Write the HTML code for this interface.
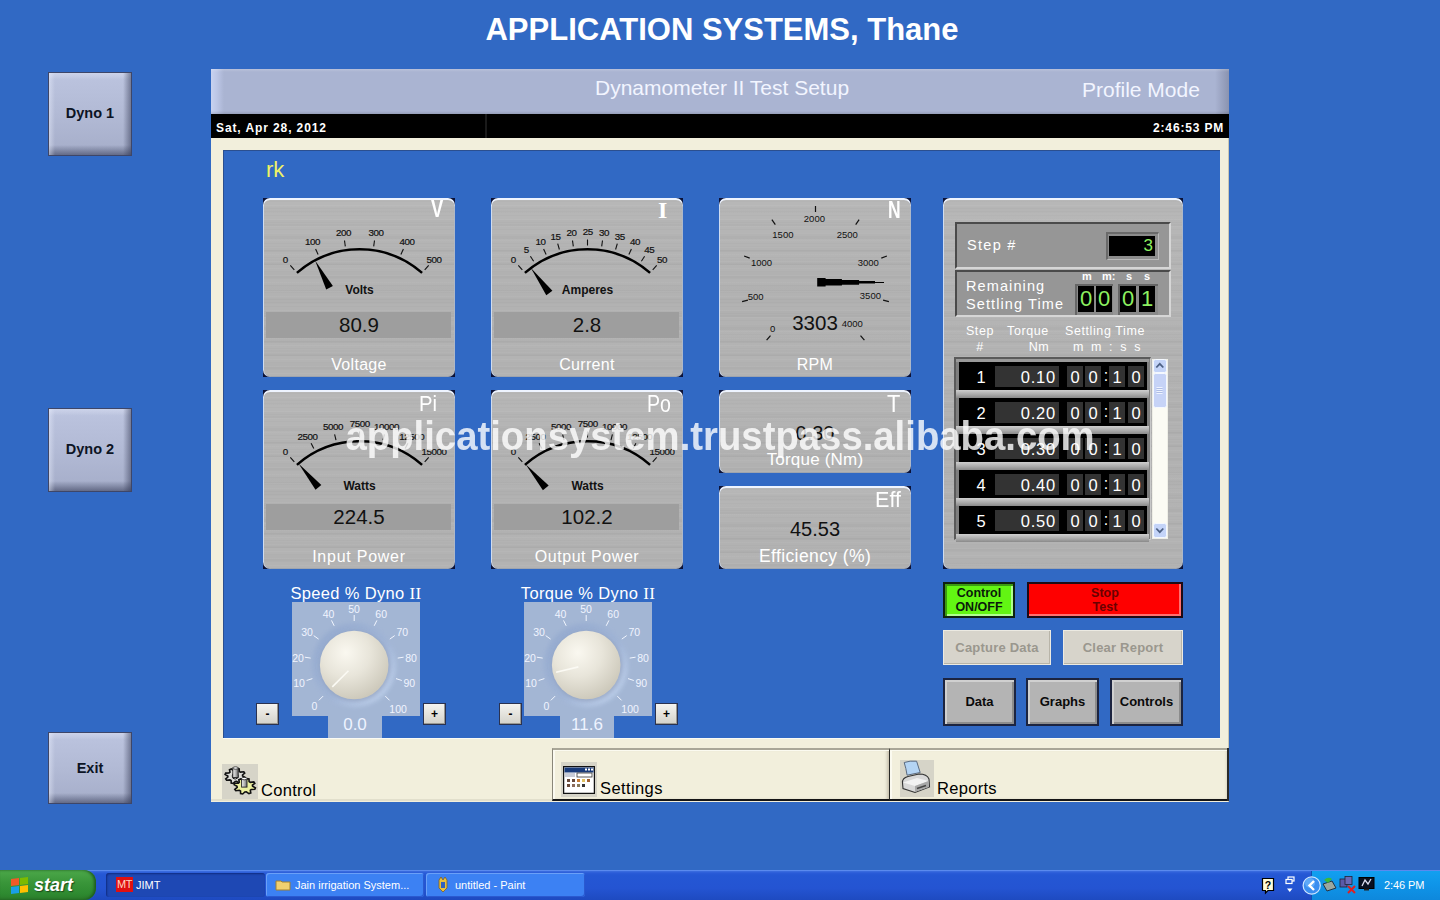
<!DOCTYPE html><html><head><meta charset="utf-8"><style>
*{margin:0;padding:0;box-sizing:border-box}
html,body{width:1440px;height:900px;overflow:hidden}
body{background:#3169C4;font-family:"Liberation Sans",sans-serif;position:relative}
.a{position:absolute}
#title{left:0;width:1444px;top:12px;text-align:center;color:#fff;font:bold 31px "Liberation Sans",sans-serif}
.dyno{width:84px;height:84px;border:1px solid #3e4668;background:
 linear-gradient(90deg,rgba(235,240,255,.45) 0,rgba(255,255,255,0) 6px,rgba(0,0,0,0) calc(100% - 8px),rgba(46,52,80,.5) 100%),
 linear-gradient(180deg,rgba(235,240,255,.35) 0,rgba(255,255,255,0) 7px,rgba(0,0,0,0) calc(100% - 10px),rgba(46,52,80,.55) 100%),
 linear-gradient(#bcc4df,#b2bad5 50%,#a5adc9);font:bold 14.5px "Liberation Sans",sans-serif;color:#0c1424;display:flex;align-items:center;justify-content:center;padding-bottom:2px}
#hdr{left:211px;top:69px;width:1018px;height:45px;background:linear-gradient(180deg,rgba(255,255,255,.18) 0,rgba(255,255,255,0) 3px,rgba(0,0,0,0) 42px,rgba(0,0,0,.12) 45px),linear-gradient(90deg,#c8d2f0 0,#bcc6e6 6px,#aab4d2 13px,#aab4d2 1004px,#8a93b0 1018px)}
#hdr span{position:absolute;color:#f2f5ff;font-size:21px;white-space:nowrap}
#blk{left:211px;top:114px;width:1018px;height:24px;background:#000;color:#fff;font:bold 12px "Liberation Sans",sans-serif;letter-spacing:.9px}
#cream{left:211px;top:138px;width:1018px;height:664px;background:#f2efdc;border-right:1px solid #c9c6b4}
#inner{left:223px;top:150px;width:997px;height:588px;background:#3169C4;box-shadow:inset 1px 1px 0 #2b4f8f}
.metal{background-color:#b0b0b0;background-image:
 linear-gradient(180deg,rgba(255,255,255,.07),rgba(255,255,255,.03) 25%,rgba(0,0,0,0) 60%,rgba(255,255,255,.02)),
 repeating-linear-gradient(180deg,rgba(255,255,255,.035) 0 1px,rgba(255,255,255,0) 1px 3px,rgba(0,0,0,.02) 3px 4px,rgba(255,255,255,0) 4px 7px),
 repeating-linear-gradient(180deg,rgba(0,0,0,.02) 0 2px,rgba(255,255,255,.03) 2px 9px,rgba(0,0,0,0) 9px 13px)}
.panel{border-radius:7px;box-shadow:inset 0 2px 0 #eef4ff,inset 1px 0 0 #cfdcf0,inset -1px 0 0 #aeb8c8,inset 0 -1px 0 #9ea4ae}
.pcorner{background:#0b1238}
.ptxt{position:absolute;color:#fff;white-space:nowrap;text-align:center}
.btn3{position:absolute;font:bold 12.5px "Liberation Sans",sans-serif;text-align:center;line-height:14px;display:flex;flex-direction:column;align-items:center;justify-content:center}
.tb{position:absolute;top:873px;height:24px;border-radius:3px;color:#fff;font-size:11px;white-space:nowrap}
</style></head><body>
<div id="title" class="a">APPLICATION SYSTEMS, Thane</div>
<div class="a dyno" style="left:48px;top:72px">Dyno 1</div>
<div class="a dyno" style="left:48px;top:408px">Dyno 2</div>
<div class="a dyno" style="left:48px;top:732px;height:72px;padding-bottom:0">Exit</div>
<div id="hdr" class="a"><span style="left:384px;top:7px">Dynamometer II Test Setup</span><span style="left:871px;top:9px">Profile Mode</span></div>
<div id="blk" class="a"><span class="a" style="left:5px;top:7px">Sat, Apr 28, 2012</span><span class="a" style="left:942px;top:7px;letter-spacing:.85px">2:46:53 PM</span><span class="a" style="left:274px;top:0;width:2px;height:24px;background:#1a1a1a"></span></div>
<div id="cream" class="a"></div>
<div id="inner" class="a"></div>
<div class="a" style="left:266px;top:157px;color:#eef266;font-size:22px">rk</div>
<div class="a pcorner" style="left:263px;top:198px;width:192px;height:179px"></div>
<div class="a metal panel" style="left:263px;top:198px;width:192px;height:179px;overflow:hidden"><div class="a" style="left:3px;top:114px;width:185px;height:26px;background:#9e9e9e"></div><svg class="a" style="left:0;top:0" width="192" height="179" font-family="Liberation Sans"><path d="M33.9 74.9 A95 95 0 0 1 159.1 74.9" fill="none" stroke="#000" stroke-width="2.5"/><line x1="31.3" y1="71.9" x2="27.3" y2="67.4" stroke="#111" stroke-width="1.1"/><text x="22.3" y="64.9" font-size="9.8" letter-spacing="-.45" text-anchor="middle" fill="#111" stroke="#111" stroke-width=".2">0</text><line x1="55.1" y1="56.5" x2="52.6" y2="51.0" stroke="#111" stroke-width="1.1"/><text x="49.4" y="47.3" font-size="9.8" letter-spacing="-.45" text-anchor="middle" fill="#111" stroke="#111" stroke-width=".2">100</text><line x1="82.3" y1="48.4" x2="81.5" y2="42.5" stroke="#111" stroke-width="1.1"/><text x="80.5" y="38.1" font-size="9.8" letter-spacing="-.45" text-anchor="middle" fill="#111" stroke="#111" stroke-width=".2">200</text><line x1="110.7" y1="48.4" x2="111.5" y2="42.5" stroke="#111" stroke-width="1.1"/><text x="112.9" y="38.1" font-size="9.8" letter-spacing="-.45" text-anchor="middle" fill="#111" stroke="#111" stroke-width=".2">300</text><line x1="137.9" y1="56.5" x2="140.4" y2="51.0" stroke="#111" stroke-width="1.1"/><text x="144.0" y="47.3" font-size="9.8" letter-spacing="-.45" text-anchor="middle" fill="#111" stroke="#111" stroke-width=".2">400</text><line x1="161.7" y1="71.9" x2="165.7" y2="67.4" stroke="#111" stroke-width="1.1"/><text x="171.1" y="64.9" font-size="9.8" letter-spacing="-.45" text-anchor="middle" fill="#111" stroke="#111" stroke-width=".2">500</text><path d="M52.1 62.4 L69.9 88.0 L63.2 91.6 Z" fill="#000"/><text x="96.5" y="96.0" font-size="12" font-weight="bold" text-anchor="middle" fill="#111">Volts</text></svg><div class="ptxt" style="left:0;width:192px;top:114.5px;font-size:20.5px;color:#111;line-height:24px">80.9</div><div class="ptxt" style="left:0;width:192px;top:157px;font-size:16px;letter-spacing:0.3px;line-height:20px">Voltage</div></div>
<div class="a pcorner" style="left:491px;top:198px;width:192px;height:179px"></div>
<div class="a metal panel" style="left:491px;top:198px;width:192px;height:179px;overflow:hidden"><div class="a" style="left:3px;top:114px;width:185px;height:26px;background:#9e9e9e"></div><svg class="a" style="left:0;top:0" width="192" height="179" font-family="Liberation Sans"><path d="M33.9 74.9 A95 95 0 0 1 159.1 74.9" fill="none" stroke="#000" stroke-width="2.5"/><line x1="31.3" y1="71.9" x2="27.3" y2="67.4" stroke="#111" stroke-width="1.1"/><text x="22.3" y="64.9" font-size="9.8" letter-spacing="-.45" text-anchor="middle" fill="#111" stroke="#111" stroke-width=".2">0</text><line x1="42.6" y1="63.3" x2="39.4" y2="58.3" stroke="#111" stroke-width="1.1"/><text x="35.2" y="55.1" font-size="9.8" letter-spacing="-.45" text-anchor="middle" fill="#111" stroke="#111" stroke-width=".2">5</text><line x1="55.1" y1="56.5" x2="52.6" y2="51.0" stroke="#111" stroke-width="1.1"/><text x="49.4" y="47.3" font-size="9.8" letter-spacing="-.45" text-anchor="middle" fill="#111" stroke="#111" stroke-width=".2">10</text><line x1="68.4" y1="51.5" x2="66.7" y2="45.7" stroke="#111" stroke-width="1.1"/><text x="64.6" y="41.5" font-size="9.8" letter-spacing="-.45" text-anchor="middle" fill="#111" stroke="#111" stroke-width=".2">15</text><line x1="82.3" y1="48.4" x2="81.5" y2="42.5" stroke="#111" stroke-width="1.1"/><text x="80.5" y="38.1" font-size="9.8" letter-spacing="-.45" text-anchor="middle" fill="#111" stroke="#111" stroke-width=".2">20</text><line x1="96.5" y1="47.4" x2="96.5" y2="41.4" stroke="#111" stroke-width="1.1"/><text x="96.7" y="36.9" font-size="9.8" letter-spacing="-.45" text-anchor="middle" fill="#111" stroke="#111" stroke-width=".2">25</text><line x1="110.7" y1="48.4" x2="111.5" y2="42.5" stroke="#111" stroke-width="1.1"/><text x="112.9" y="38.1" font-size="9.8" letter-spacing="-.45" text-anchor="middle" fill="#111" stroke="#111" stroke-width=".2">30</text><line x1="124.6" y1="51.5" x2="126.3" y2="45.7" stroke="#111" stroke-width="1.1"/><text x="128.8" y="41.5" font-size="9.8" letter-spacing="-.45" text-anchor="middle" fill="#111" stroke="#111" stroke-width=".2">35</text><line x1="137.9" y1="56.5" x2="140.4" y2="51.0" stroke="#111" stroke-width="1.1"/><text x="144.0" y="47.3" font-size="9.8" letter-spacing="-.45" text-anchor="middle" fill="#111" stroke="#111" stroke-width=".2">40</text><line x1="150.4" y1="63.3" x2="153.6" y2="58.3" stroke="#111" stroke-width="1.1"/><text x="158.2" y="55.1" font-size="9.8" letter-spacing="-.45" text-anchor="middle" fill="#111" stroke="#111" stroke-width=".2">45</text><line x1="161.7" y1="71.9" x2="165.7" y2="67.4" stroke="#111" stroke-width="1.1"/><text x="171.1" y="64.9" font-size="9.8" letter-spacing="-.45" text-anchor="middle" fill="#111" stroke="#111" stroke-width=".2">50</text><path d="M39.9 70.1 L61.4 92.7 L55.3 97.3 Z" fill="#000"/><text x="96.5" y="96.4" font-size="12" font-weight="bold" text-anchor="middle" fill="#111">Amperes</text></svg><div class="ptxt" style="left:0;width:192px;top:114.5px;font-size:20.5px;color:#111;line-height:24px">2.8</div><div class="ptxt" style="left:0;width:192px;top:157px;font-size:16px;letter-spacing:0.3px;line-height:20px">Current</div></div>
<div class="a pcorner" style="left:263px;top:390px;width:192px;height:179px"></div>
<div class="a metal panel" style="left:263px;top:390px;width:192px;height:179px;overflow:hidden"><div class="a" style="left:3px;top:114px;width:185px;height:26px;background:#9e9e9e"></div><svg class="a" style="left:0;top:0" width="192" height="179" font-family="Liberation Sans"><path d="M33.9 74.9 A95 95 0 0 1 159.1 74.9" fill="none" stroke="#000" stroke-width="2.5"/><line x1="31.3" y1="71.9" x2="27.3" y2="67.4" stroke="#111" stroke-width="1.1"/><text x="22.3" y="64.9" font-size="9.8" letter-spacing="-.45" text-anchor="middle" fill="#111" stroke="#111" stroke-width=".2">0</text><line x1="50.8" y1="58.6" x2="48.1" y2="53.2" stroke="#111" stroke-width="1.1"/><text x="44.6" y="49.6" font-size="9.8" letter-spacing="-.45" text-anchor="middle" fill="#111" stroke="#111" stroke-width=".2">2500</text><line x1="73.0" y1="50.2" x2="71.6" y2="44.4" stroke="#111" stroke-width="1.1"/><text x="69.9" y="40.1" font-size="9.8" letter-spacing="-.45" text-anchor="middle" fill="#111" stroke="#111" stroke-width=".2">5000</text><line x1="96.5" y1="47.4" x2="96.5" y2="41.4" stroke="#111" stroke-width="1.1"/><text x="96.7" y="36.9" font-size="9.8" letter-spacing="-.45" text-anchor="middle" fill="#111" stroke="#111" stroke-width=".2">7500</text><line x1="120.0" y1="50.2" x2="121.4" y2="44.4" stroke="#111" stroke-width="1.1"/><text x="123.5" y="40.1" font-size="9.8" letter-spacing="-.45" text-anchor="middle" fill="#111" stroke="#111" stroke-width=".2">10000</text><line x1="142.2" y1="58.6" x2="144.9" y2="53.2" stroke="#111" stroke-width="1.1"/><text x="148.8" y="49.6" font-size="9.8" letter-spacing="-.45" text-anchor="middle" fill="#111" stroke="#111" stroke-width=".2">12500</text><line x1="161.7" y1="71.9" x2="165.7" y2="67.4" stroke="#111" stroke-width="1.1"/><text x="171.1" y="64.9" font-size="9.8" letter-spacing="-.45" text-anchor="middle" fill="#111" stroke="#111" stroke-width=".2">15000</text><path d="M35.5 73.6 L58.3 94.9 L52.5 99.8 Z" fill="#000"/><text x="96.5" y="99.7" font-size="12" font-weight="bold" text-anchor="middle" fill="#111">Watts</text></svg><div class="ptxt" style="left:0;width:192px;top:114.5px;font-size:20.5px;color:#111;line-height:24px">224.5</div><div class="ptxt" style="left:0;width:192px;top:157px;font-size:16px;letter-spacing:0.75px;line-height:20px">Input Power</div></div>
<div class="a pcorner" style="left:491px;top:390px;width:192px;height:179px"></div>
<div class="a metal panel" style="left:491px;top:390px;width:192px;height:179px;overflow:hidden"><div class="a" style="left:3px;top:114px;width:185px;height:26px;background:#9e9e9e"></div><svg class="a" style="left:0;top:0" width="192" height="179" font-family="Liberation Sans"><path d="M33.9 74.9 A95 95 0 0 1 159.1 74.9" fill="none" stroke="#000" stroke-width="2.5"/><line x1="31.3" y1="71.9" x2="27.3" y2="67.4" stroke="#111" stroke-width="1.1"/><text x="22.3" y="64.9" font-size="9.8" letter-spacing="-.45" text-anchor="middle" fill="#111" stroke="#111" stroke-width=".2">0</text><line x1="50.8" y1="58.6" x2="48.1" y2="53.2" stroke="#111" stroke-width="1.1"/><text x="44.6" y="49.6" font-size="9.8" letter-spacing="-.45" text-anchor="middle" fill="#111" stroke="#111" stroke-width=".2">2500</text><line x1="73.0" y1="50.2" x2="71.6" y2="44.4" stroke="#111" stroke-width="1.1"/><text x="69.9" y="40.1" font-size="9.8" letter-spacing="-.45" text-anchor="middle" fill="#111" stroke="#111" stroke-width=".2">5000</text><line x1="96.5" y1="47.4" x2="96.5" y2="41.4" stroke="#111" stroke-width="1.1"/><text x="96.7" y="36.9" font-size="9.8" letter-spacing="-.45" text-anchor="middle" fill="#111" stroke="#111" stroke-width=".2">7500</text><line x1="120.0" y1="50.2" x2="121.4" y2="44.4" stroke="#111" stroke-width="1.1"/><text x="123.5" y="40.1" font-size="9.8" letter-spacing="-.45" text-anchor="middle" fill="#111" stroke="#111" stroke-width=".2">10000</text><line x1="142.2" y1="58.6" x2="144.9" y2="53.2" stroke="#111" stroke-width="1.1"/><text x="148.8" y="49.6" font-size="9.8" letter-spacing="-.45" text-anchor="middle" fill="#111" stroke="#111" stroke-width=".2">12500</text><line x1="161.7" y1="71.9" x2="165.7" y2="67.4" stroke="#111" stroke-width="1.1"/><text x="171.1" y="64.9" font-size="9.8" letter-spacing="-.45" text-anchor="middle" fill="#111" stroke="#111" stroke-width=".2">15000</text><path d="M34.6 74.3 L57.7 95.4 L51.9 100.3 Z" fill="#000"/><text x="96.5" y="99.7" font-size="12" font-weight="bold" text-anchor="middle" fill="#111">Watts</text></svg><div class="ptxt" style="left:0;width:192px;top:114.5px;font-size:20.5px;color:#111;line-height:24px">102.2</div><div class="ptxt" style="left:0;width:192px;top:157px;font-size:16px;letter-spacing:0.55px;line-height:20px">Output Power</div></div>
<div class="a pcorner" style="left:719px;top:198px;width:192px;height:179px"></div>
<div class="a metal panel" style="left:719px;top:198px;width:192px;height:179px;overflow:hidden"><svg class="a" style="left:0;top:0" width="192" height="179" font-family="Liberation Sans"><line x1="51.5" y1="137.6" x2="47.6" y2="142.2" stroke="#111" stroke-width="1.2"/><text x="53.7" y="133.7" font-size="9.5" text-anchor="middle" fill="#111">0</text><line x1="28.9" y1="102.1" x2="23.1" y2="103.7" stroke="#111" stroke-width="1.2"/><text x="36.6" y="101.7" font-size="9.5" text-anchor="middle" fill="#111">500</text><line x1="30.7" y1="60.1" x2="25.1" y2="58.0" stroke="#111" stroke-width="1.2"/><text x="42.6" y="67.7" font-size="9.5" text-anchor="middle" fill="#111">1000</text><line x1="56.3" y1="26.7" x2="52.9" y2="21.7" stroke="#111" stroke-width="1.2"/><text x="63.9" y="39.9" font-size="9.5" text-anchor="middle" fill="#111">1500</text><line x1="96.5" y1="14.0" x2="96.5" y2="8.0" stroke="#111" stroke-width="1.2"/><text x="95.4" y="23.9" font-size="9.5" text-anchor="middle" fill="#111">2000</text><line x1="136.7" y1="26.7" x2="140.1" y2="21.7" stroke="#111" stroke-width="1.2"/><text x="128.3" y="39.9" font-size="9.5" text-anchor="middle" fill="#111">2500</text><line x1="162.3" y1="60.1" x2="167.9" y2="58.0" stroke="#111" stroke-width="1.2"/><text x="149.2" y="67.7" font-size="9.5" text-anchor="middle" fill="#111">3000</text><line x1="164.1" y1="102.1" x2="169.9" y2="103.7" stroke="#111" stroke-width="1.2"/><text x="151.4" y="101.1" font-size="9.5" text-anchor="middle" fill="#111">3500</text><line x1="141.5" y1="137.6" x2="145.4" y2="142.2" stroke="#111" stroke-width="1.2"/><text x="133.2" y="128.6" font-size="9.5" text-anchor="middle" fill="#111">4000</text><path d="M98.2 80.1 H106.6 V81 H122.9 V82 H140.1 V83.1 H156 V84 H165 V84.9 H156 V85.6 H140.1 V86.7 H122.9 V87.6 H106.6 V88.6 H98.2 Z" fill="#000"/></svg><div class="ptxt" style="left:0;width:192px;top:113.3px;font-size:20.5px;color:#111;line-height:24px">3303</div><div class="ptxt" style="left:0;width:192px;top:157px;font-size:16px;letter-spacing:0.3px;line-height:20px">RPM</div></div>
<div class="a pcorner" style="left:719px;top:390px;width:192px;height:83px"></div>
<div class="a metal panel" style="left:719px;top:390px;width:192px;height:83px;overflow:hidden"><div class="ptxt" style="left:0;width:192px;top:31px;font-size:20px;color:#111;line-height:24px">0.30</div><div class="ptxt" style="left:0;width:192px;top:60px;font-size:17px;letter-spacing:0.2px;line-height:20px">Torque (Nm)</div></div>
<div class="a pcorner" style="left:719px;top:486px;width:192px;height:83px"></div>
<div class="a metal panel" style="left:719px;top:486px;width:192px;height:83px;overflow:hidden"><div class="ptxt" style="left:0;width:192px;top:31px;font-size:20px;color:#111;line-height:24px">45.53</div><div class="ptxt" style="left:0;width:192px;top:60px;font-size:17.5px;letter-spacing:0.4px;line-height:20px">Efficiency (%)</div></div>
<div class="a pcorner" style="left:943px;top:198px;width:240px;height:371px"></div>
<div class="a metal panel" style="left:943px;top:198px;width:240px;height:371px;overflow:hidden"><div class="a" style="left:12px;top:24px;width:216px;height:47px;background:#969696;border-top:2px solid #4a4a4a;border-left:2px solid #4a4a4a;border-bottom:2px solid #d6d6d6;border-right:2px solid #d6d6d6"></div><div class="a" style="left:12px;top:72px;width:216px;height:47px;background:#969696;border-top:2px solid #4a4a4a;border-left:2px solid #4a4a4a;border-bottom:2px solid #d6d6d6;border-right:2px solid #d6d6d6"></div><div class="ptxt" style="left:24px;top:38px;font-size:14.5px;letter-spacing:1.3px;line-height:18px;text-align:left">Step #</div><div class="a" style="left:163px;top:34px;width:53px;height:28px;background:#8c8c8c;border-top:2px solid #6a6a6a;border-left:2px solid #6a6a6a;border-right:1px solid #b8b8b8;border-bottom:1px solid #b8b8b8"></div><div class="a" style="left:166px;top:38px;width:46px;height:20px;background:#000"></div><div class="ptxt" style="left:166px;width:44px;top:38px;font-size:17px;line-height:20px;color:#8df060;text-align:right">3</div><div class="ptxt" style="left:23px;top:79px;font-size:14.5px;letter-spacing:1.1px;line-height:18px;text-align:left">Remaining<br>Settling Time</div><div class="ptxt" style="left:139px;top:71px;font:bold 11px 'Liberation Sans',sans-serif;line-height:14px">m</div><div class="ptxt" style="left:159px;top:71px;font:bold 11px 'Liberation Sans',sans-serif;line-height:14px">m:</div><div class="ptxt" style="left:183px;top:71px;font:bold 11px 'Liberation Sans',sans-serif;line-height:14px">s</div><div class="ptxt" style="left:201px;top:71px;font:bold 11px 'Liberation Sans',sans-serif;line-height:14px">s</div><div class="a" style="left:132px;top:86px;width:38px;height:31px;background:#8a8a8a;border-top:2px solid #666;border-left:2px solid #666"></div><div class="a" style="left:175px;top:86px;width:40px;height:31px;background:#8a8a8a;border-top:2px solid #666;border-left:2px solid #666"></div><div class="a" style="left:135px;top:88px;width:16px;height:26px;background:#000;color:#8df060;font-size:22px;line-height:26px;text-align:center">0</div><div class="a" style="left:153px;top:88px;width:16px;height:26px;background:#000;color:#8df060;font-size:22px;line-height:26px;text-align:center">0</div><div class="a" style="left:177px;top:88px;width:16px;height:26px;background:#000;color:#8df060;font-size:22px;line-height:26px;text-align:center">0</div><div class="a" style="left:196px;top:88px;width:16px;height:26px;background:#000;color:#8df060;font-size:22px;line-height:26px;text-align:center">1</div><div class="ptxt" style="left:22px;width:30px;top:126px;font-size:12.5px;letter-spacing:.6px;line-height:14px">Step</div><div class="ptxt" style="left:60px;width:50px;top:126px;font-size:12.5px;letter-spacing:.6px;line-height:14px">Torque</div><div class="ptxt" style="left:118px;width:88px;top:126px;font-size:12.5px;letter-spacing:.6px;line-height:14px">Settling Time</div><div class="ptxt" style="left:22px;width:30px;top:142px;font-size:12.5px;letter-spacing:.6px;line-height:14px">#</div><div class="ptxt" style="left:81px;width:30px;top:142px;font-size:12.5px;letter-spacing:.6px;line-height:14px">Nm</div><div class="ptxt" style="left:118px;width:92px;top:142px;font-size:12.5px;letter-spacing:.6px;line-height:14px;word-spacing:3px">m m : s s</div><div class="a" style="left:11px;top:159px;width:197px;height:183px;background:#7e7e7e;border-top:2px solid #5a5a5a;border-left:2px solid #5a5a5a;border-right:1px solid #c8c8c8;border-bottom:1px solid #c8c8c8"></div><div class="a" style="left:13px;top:161px;width:193px;height:3px;background:#9a9a9a"></div><div class="a" style="left:13px;top:192px;width:193px;height:8px;background:linear-gradient(#cfcfcf,#a8a8a8 60%,#8a8a8a)"></div><div class="a" style="left:16px;top:164px;width:188px;height:28px;background:#000"></div><div class="ptxt" style="left:28px;width:20px;top:170px;font-size:16.5px;line-height:18px">1</div><div class="a" style="left:52px;top:168px;width:64px;height:21px;background:#333"></div><div class="ptxt" style="left:52px;width:61px;top:170px;font-size:16.5px;letter-spacing:.8px;line-height:18px;text-align:right">0.10</div><div class="a" style="left:124px;top:168px;width:16px;height:21px;background:#333;color:#fff;font-size:16.5px;line-height:22px;text-align:center">0</div><div class="a" style="left:142px;top:168px;width:16px;height:21px;background:#333;color:#fff;font-size:16.5px;line-height:22px;text-align:center">0</div><div class="a" style="left:166px;top:168px;width:16px;height:21px;background:#333;color:#fff;font-size:16.5px;line-height:22px;text-align:center">1</div><div class="a" style="left:185px;top:168px;width:16px;height:21px;background:#333;color:#fff;font-size:16.5px;line-height:22px;text-align:center">0</div><div class="ptxt" style="left:159px;width:8px;top:168px;font-size:16px;line-height:19px">:</div><div class="a" style="left:13px;top:228px;width:193px;height:8px;background:linear-gradient(#cfcfcf,#a8a8a8 60%,#8a8a8a)"></div><div class="a" style="left:16px;top:200px;width:188px;height:28px;background:#000"></div><div class="ptxt" style="left:28px;width:20px;top:206px;font-size:16.5px;line-height:18px">2</div><div class="a" style="left:52px;top:204px;width:64px;height:21px;background:#333"></div><div class="ptxt" style="left:52px;width:61px;top:206px;font-size:16.5px;letter-spacing:.8px;line-height:18px;text-align:right">0.20</div><div class="a" style="left:124px;top:204px;width:16px;height:21px;background:#333;color:#fff;font-size:16.5px;line-height:22px;text-align:center">0</div><div class="a" style="left:142px;top:204px;width:16px;height:21px;background:#333;color:#fff;font-size:16.5px;line-height:22px;text-align:center">0</div><div class="a" style="left:166px;top:204px;width:16px;height:21px;background:#333;color:#fff;font-size:16.5px;line-height:22px;text-align:center">1</div><div class="a" style="left:185px;top:204px;width:16px;height:21px;background:#333;color:#fff;font-size:16.5px;line-height:22px;text-align:center">0</div><div class="ptxt" style="left:159px;width:8px;top:204px;font-size:16px;line-height:19px">:</div><div class="a" style="left:13px;top:264px;width:193px;height:8px;background:linear-gradient(#cfcfcf,#a8a8a8 60%,#8a8a8a)"></div><div class="a" style="left:16px;top:236px;width:188px;height:28px;background:#000"></div><div class="ptxt" style="left:28px;width:20px;top:242px;font-size:16.5px;line-height:18px">3</div><div class="a" style="left:52px;top:240px;width:64px;height:21px;background:#333"></div><div class="ptxt" style="left:52px;width:61px;top:242px;font-size:16.5px;letter-spacing:.8px;line-height:18px;text-align:right">0.30</div><div class="a" style="left:124px;top:240px;width:16px;height:21px;background:#333;color:#fff;font-size:16.5px;line-height:22px;text-align:center">0</div><div class="a" style="left:142px;top:240px;width:16px;height:21px;background:#333;color:#fff;font-size:16.5px;line-height:22px;text-align:center">0</div><div class="a" style="left:166px;top:240px;width:16px;height:21px;background:#333;color:#fff;font-size:16.5px;line-height:22px;text-align:center">1</div><div class="a" style="left:185px;top:240px;width:16px;height:21px;background:#333;color:#fff;font-size:16.5px;line-height:22px;text-align:center">0</div><div class="ptxt" style="left:159px;width:8px;top:240px;font-size:16px;line-height:19px">:</div><div class="a" style="left:13px;top:300px;width:193px;height:8px;background:linear-gradient(#cfcfcf,#a8a8a8 60%,#8a8a8a)"></div><div class="a" style="left:16px;top:272px;width:188px;height:28px;background:#000"></div><div class="ptxt" style="left:28px;width:20px;top:278px;font-size:16.5px;line-height:18px">4</div><div class="a" style="left:52px;top:276px;width:64px;height:21px;background:#333"></div><div class="ptxt" style="left:52px;width:61px;top:278px;font-size:16.5px;letter-spacing:.8px;line-height:18px;text-align:right">0.40</div><div class="a" style="left:124px;top:276px;width:16px;height:21px;background:#333;color:#fff;font-size:16.5px;line-height:22px;text-align:center">0</div><div class="a" style="left:142px;top:276px;width:16px;height:21px;background:#333;color:#fff;font-size:16.5px;line-height:22px;text-align:center">0</div><div class="a" style="left:166px;top:276px;width:16px;height:21px;background:#333;color:#fff;font-size:16.5px;line-height:22px;text-align:center">1</div><div class="a" style="left:185px;top:276px;width:16px;height:21px;background:#333;color:#fff;font-size:16.5px;line-height:22px;text-align:center">0</div><div class="ptxt" style="left:159px;width:8px;top:276px;font-size:16px;line-height:19px">:</div><div class="a" style="left:13px;top:336px;width:193px;height:8px;background:linear-gradient(#cfcfcf,#a8a8a8 60%,#8a8a8a)"></div><div class="a" style="left:16px;top:308px;width:188px;height:28px;background:#000"></div><div class="ptxt" style="left:28px;width:20px;top:314px;font-size:16.5px;line-height:18px">5</div><div class="a" style="left:52px;top:312px;width:64px;height:21px;background:#333"></div><div class="ptxt" style="left:52px;width:61px;top:314px;font-size:16.5px;letter-spacing:.8px;line-height:18px;text-align:right">0.50</div><div class="a" style="left:124px;top:312px;width:16px;height:21px;background:#333;color:#fff;font-size:16.5px;line-height:22px;text-align:center">0</div><div class="a" style="left:142px;top:312px;width:16px;height:21px;background:#333;color:#fff;font-size:16.5px;line-height:22px;text-align:center">0</div><div class="a" style="left:166px;top:312px;width:16px;height:21px;background:#333;color:#fff;font-size:16.5px;line-height:22px;text-align:center">1</div><div class="a" style="left:185px;top:312px;width:16px;height:21px;background:#333;color:#fff;font-size:16.5px;line-height:22px;text-align:center">0</div><div class="ptxt" style="left:159px;width:8px;top:312px;font-size:16px;line-height:19px">:</div><div class="a" style="left:209px;top:161px;width:16px;height:180px;background:#fbfbf4;border:1px solid #eeeee6"></div><svg class="a" style="left:209px;top:160px" width="16" height="182"><rect x="1.5" y="1.5" width="13" height="13" rx="2" fill="#c4d4f8" stroke="#f4f8ff" stroke-width="1"/><path d="M4.3 9.5 L7.8 5.8 L11.3 9.5" fill="none" stroke="#4d6185" stroke-width="1.8"/><rect x="1.5" y="15.5" width="13" height="34" rx="2" fill="#c6d3f7" stroke="#f4f8ff" stroke-width="1"/><path d="M4.5 29.5h6M4.5 31.5h6M4.5 33.5h6M4.5 35.5h6" stroke="#eef3ff" stroke-width="1"/><path d="M4.5 30.5h6M4.5 32.5h6M4.5 34.5h6" stroke="#a8b8e0" stroke-width=".8"/><rect x="1.5" y="165.5" width="13" height="14" rx="2" fill="#c4d4f8" stroke="#f4f8ff" stroke-width="1"/><path d="M4.3 170.5 L7.8 174.2 L11.3 170.5" fill="none" stroke="#4d6185" stroke-width="1.8"/></svg></div>
<div class="btn3" style="left:943px;top:582px;width:72px;height:36px;background:#62f513;border:2px solid #0e2210;box-shadow:inset 2px 2px 0 #3c9a12,inset -2px -2px 0 #b0ff90;color:#0a1a0a">Control<br>ON/OFF</div>
<div class="btn3" style="left:1027px;top:582px;width:156px;height:36px;background:#fe0000;border:2px solid #1e0a14;box-shadow:inset -2px -2px 0 #ff7070;color:#6a0000">Stop<br>Test</div>
<div class="btn3" style="left:943px;top:630px;width:108px;height:35px;background:#d7d4cb;border:1px solid #eceae2;box-shadow:inset -1px -1px 0 #b8b4a8;color:#9a978e;font-size:13px;letter-spacing:.2px">Capture Data</div>
<div class="btn3" style="left:1063px;top:630px;width:120px;height:35px;background:#d7d4cb;border:1px solid #eceae2;box-shadow:inset -1px -1px 0 #b8b4a8;color:#9a978e;font-size:13px;letter-spacing:.2px">Clear Report</div>
<div class="btn3" style="left:943px;top:678px;width:73px;height:48px;background:#b4b4b4;border:2px solid #1c2440;box-shadow:inset 2px 2px 0 #d0d0d0,inset -2px -2px 0 #8c8c8c;color:#0a0a0a;font-size:13px">Data</div>
<div class="btn3" style="left:1026px;top:678px;width:73px;height:48px;background:#b4b4b4;border:2px solid #1c2440;box-shadow:inset 2px 2px 0 #d0d0d0,inset -2px -2px 0 #8c8c8c;color:#0a0a0a;font-size:13px">Graphs</div>
<div class="btn3" style="left:1110px;top:678px;width:73px;height:48px;background:#b4b4b4;border:2px solid #1c2440;box-shadow:inset 2px 2px 0 #d0d0d0,inset -2px -2px 0 #8c8c8c;color:#0a0a0a;font-size:13px">Controls</div>
<div class="a" style="left:278px;top:583px;width:156px;text-align:center;color:#fff;font-size:16.5px;line-height:20px;white-space:nowrap;letter-spacing:.35px">Speed % Dyno <span style="font-family:Liberation Serif;font-size:17px">II</span></div>
<div class="a" style="left:292px;top:602px;width:128px;height:114px;background:#a3b6d4"></div>
<div class="a" style="left:328px;top:716px;width:54px;height:22px;background:#a3b6d4"></div>
<div class="a" style="left:328px;top:714px;width:54px;text-align:center;color:#eef3ff;font-size:17px;line-height:22px">0.0</div>
<svg class="a" style="left:292px;top:602px" width="128" height="114" font-family="Liberation Sans"><defs><radialGradient id="kg292" cx="38%" cy="32%" r="70%"><stop offset="0" stop-color="#faf8f0"/><stop offset=".5" stop-color="#e8e5da"/><stop offset="1" stop-color="#cdc9bb"/></radialGradient><linearGradient id="rg292" x1="0" y1="0" x2="1" y2="1"><stop offset="0" stop-color="#90a6cc"/><stop offset=".55" stop-color="#a0b4d6"/><stop offset="1" stop-color="#cfe0f8"/></linearGradient></defs><filter id="bl292" x="-30%" y="-30%" width="160%" height="160%"><feGaussianBlur stdDeviation="2.2"/></filter><circle cx="62.2" cy="63" r="42" fill="url(#rg292)" filter="url(#bl292)" opacity=".85"/><circle cx="63.2" cy="64.5" r="35" fill="#8a98b4" opacity=".55" filter="url(#bl292)"/><circle cx="62.2" cy="63" r="34.3" fill="url(#kg292)"/><line x1="31.1" y1="94.1" x2="26.8" y2="98.4" stroke="#f2f6ff" stroke-width="1"/><line x1="20.4" y1="76.6" x2="14.6" y2="78.5" stroke="#f2f6ff" stroke-width="1"/><line x1="18.7" y1="56.1" x2="12.8" y2="55.2" stroke="#f2f6ff" stroke-width="1"/><line x1="26.6" y1="37.1" x2="21.7" y2="33.6" stroke="#f2f6ff" stroke-width="1"/><line x1="42.2" y1="23.8" x2="39.5" y2="18.4" stroke="#f2f6ff" stroke-width="1"/><line x1="62.2" y1="19.0" x2="62.2" y2="13.0" stroke="#f2f6ff" stroke-width="1"/><line x1="82.2" y1="23.8" x2="84.9" y2="18.4" stroke="#f2f6ff" stroke-width="1"/><line x1="97.8" y1="37.1" x2="102.7" y2="33.6" stroke="#f2f6ff" stroke-width="1"/><line x1="105.7" y1="56.1" x2="111.6" y2="55.2" stroke="#f2f6ff" stroke-width="1"/><line x1="104.0" y1="76.6" x2="109.8" y2="78.5" stroke="#f2f6ff" stroke-width="1"/><line x1="93.3" y1="94.1" x2="97.6" y2="98.4" stroke="#f2f6ff" stroke-width="1"/><text x="22.4" y="107.5" font-size="10.5" text-anchor="middle" fill="#f0f4ff">0</text><text x="7.1" y="85.1" font-size="10.5" text-anchor="middle" fill="#f0f4ff">10</text><text x="6.1" y="59.5" font-size="10.5" text-anchor="middle" fill="#f0f4ff">20</text><text x="15.1" y="34.0" font-size="10.5" text-anchor="middle" fill="#f0f4ff">30</text><text x="36.5" y="15.5" font-size="10.5" text-anchor="middle" fill="#f0f4ff">40</text><text x="62" y="11.0" font-size="10.5" text-anchor="middle" fill="#f0f4ff">50</text><text x="89.2" y="15.5" font-size="10.5" text-anchor="middle" fill="#f0f4ff">60</text><text x="110.3" y="34.0" font-size="10.5" text-anchor="middle" fill="#f0f4ff">70</text><text x="119" y="59.5" font-size="10.5" text-anchor="middle" fill="#f0f4ff">80</text><text x="117.3" y="85.1" font-size="10.5" text-anchor="middle" fill="#f0f4ff">90</text><text x="106.1" y="110.7" font-size="10.5" text-anchor="middle" fill="#f0f4ff">100</text><line x1="56.5" y1="68.7" x2="40.3" y2="84.9" stroke="#fbfaf4" stroke-width="1.6"/></svg>
<div class="a" style="left:510px;top:583px;width:156px;text-align:center;color:#fff;font-size:16.5px;line-height:20px;white-space:nowrap;letter-spacing:.35px">Torque % Dyno <span style="font-family:Liberation Serif;font-size:17px">II</span></div>
<div class="a" style="left:524px;top:602px;width:128px;height:114px;background:#a3b6d4"></div>
<div class="a" style="left:560px;top:716px;width:54px;height:22px;background:#a3b6d4"></div>
<div class="a" style="left:560px;top:714px;width:54px;text-align:center;color:#eef3ff;font-size:17px;line-height:22px">11.6</div>
<svg class="a" style="left:524px;top:602px" width="128" height="114" font-family="Liberation Sans"><defs><radialGradient id="kg524" cx="38%" cy="32%" r="70%"><stop offset="0" stop-color="#faf8f0"/><stop offset=".5" stop-color="#e8e5da"/><stop offset="1" stop-color="#cdc9bb"/></radialGradient><linearGradient id="rg524" x1="0" y1="0" x2="1" y2="1"><stop offset="0" stop-color="#90a6cc"/><stop offset=".55" stop-color="#a0b4d6"/><stop offset="1" stop-color="#cfe0f8"/></linearGradient></defs><filter id="bl524" x="-30%" y="-30%" width="160%" height="160%"><feGaussianBlur stdDeviation="2.2"/></filter><circle cx="62.2" cy="63" r="42" fill="url(#rg524)" filter="url(#bl524)" opacity=".85"/><circle cx="63.2" cy="64.5" r="35" fill="#8a98b4" opacity=".55" filter="url(#bl524)"/><circle cx="62.2" cy="63" r="34.3" fill="url(#kg524)"/><line x1="31.1" y1="94.1" x2="26.8" y2="98.4" stroke="#f2f6ff" stroke-width="1"/><line x1="20.4" y1="76.6" x2="14.6" y2="78.5" stroke="#f2f6ff" stroke-width="1"/><line x1="18.7" y1="56.1" x2="12.8" y2="55.2" stroke="#f2f6ff" stroke-width="1"/><line x1="26.6" y1="37.1" x2="21.7" y2="33.6" stroke="#f2f6ff" stroke-width="1"/><line x1="42.2" y1="23.8" x2="39.5" y2="18.4" stroke="#f2f6ff" stroke-width="1"/><line x1="62.2" y1="19.0" x2="62.2" y2="13.0" stroke="#f2f6ff" stroke-width="1"/><line x1="82.2" y1="23.8" x2="84.9" y2="18.4" stroke="#f2f6ff" stroke-width="1"/><line x1="97.8" y1="37.1" x2="102.7" y2="33.6" stroke="#f2f6ff" stroke-width="1"/><line x1="105.7" y1="56.1" x2="111.6" y2="55.2" stroke="#f2f6ff" stroke-width="1"/><line x1="104.0" y1="76.6" x2="109.8" y2="78.5" stroke="#f2f6ff" stroke-width="1"/><line x1="93.3" y1="94.1" x2="97.6" y2="98.4" stroke="#f2f6ff" stroke-width="1"/><text x="22.4" y="107.5" font-size="10.5" text-anchor="middle" fill="#f0f4ff">0</text><text x="7.1" y="85.1" font-size="10.5" text-anchor="middle" fill="#f0f4ff">10</text><text x="6.1" y="59.5" font-size="10.5" text-anchor="middle" fill="#f0f4ff">20</text><text x="15.1" y="34.0" font-size="10.5" text-anchor="middle" fill="#f0f4ff">30</text><text x="36.5" y="15.5" font-size="10.5" text-anchor="middle" fill="#f0f4ff">40</text><text x="62" y="11.0" font-size="10.5" text-anchor="middle" fill="#f0f4ff">50</text><text x="89.2" y="15.5" font-size="10.5" text-anchor="middle" fill="#f0f4ff">60</text><text x="110.3" y="34.0" font-size="10.5" text-anchor="middle" fill="#f0f4ff">70</text><text x="119" y="59.5" font-size="10.5" text-anchor="middle" fill="#f0f4ff">80</text><text x="117.3" y="85.1" font-size="10.5" text-anchor="middle" fill="#f0f4ff">90</text><text x="106.1" y="110.7" font-size="10.5" text-anchor="middle" fill="#f0f4ff">100</text><line x1="54.4" y1="64.9" x2="32.1" y2="70.3" stroke="#fbfaf4" stroke-width="1.6"/></svg>
<div class="a" style="left:256px;top:703px;width:23px;height:22px;background:linear-gradient(#f4f4f0,#d4d2ca);border:1px solid #2a3250;box-shadow:inset -1px -1px 0 #9a9890;color:#000;font:bold 12px 'Liberation Sans',sans-serif;line-height:20px;text-align:center">-</div>
<div class="a" style="left:423px;top:703px;width:23px;height:22px;background:linear-gradient(#f4f4f0,#d4d2ca);border:1px solid #2a3250;box-shadow:inset -1px -1px 0 #9a9890;color:#000;font:bold 12px 'Liberation Sans',sans-serif;line-height:20px;text-align:center">+</div>
<div class="a" style="left:499px;top:703px;width:23px;height:22px;background:linear-gradient(#f4f4f0,#d4d2ca);border:1px solid #2a3250;box-shadow:inset -1px -1px 0 #9a9890;color:#000;font:bold 12px 'Liberation Sans',sans-serif;line-height:20px;text-align:center">-</div>
<div class="a" style="left:655px;top:703px;width:23px;height:22px;background:linear-gradient(#f4f4f0,#d4d2ca);border:1px solid #2a3250;box-shadow:inset -1px -1px 0 #9a9890;color:#000;font:bold 12px 'Liberation Sans',sans-serif;line-height:20px;text-align:center">+</div>
<div class="a" style="left:223px;top:738px;width:997px;height:1px;background:#fbfbf4"></div>
<div class="a" style="left:552px;top:748px;width:337px;height:53px;background:#f2efdc;border-top:2px solid #a9a697;border-left:1px solid #8a877a;border-bottom:2px solid #161616;box-shadow:inset 2px 1px 0 #fbfaf0,inset -3px 0 3px -1px rgba(120,110,90,.35)"></div>
<div class="a" style="left:889px;top:748px;width:340px;height:53px;background:#f2efdc;border-top:2px solid #a9a697;border-left:1px solid #2a2a26;border-bottom:2px solid #161616;box-shadow:inset 2px 1px 0 #fbfaf0,inset -3px 0 3px -1px rgba(120,110,90,.35)"></div>
<div class="a" style="left:1227px;top:748px;width:2px;height:53px;background:#2a2a2a"></div>
<div class="a" style="left:211px;top:799px;width:341px;height:2px;background:#e2dfcc"></div>
<div class="a" style="left:222px;top:764px;width:36px;height:35px;background:#d6d4c8"></div>
<div class="a" style="left:561px;top:762px;width:36px;height:35px;background:#d6d4c8"></div>
<div class="a" style="left:900px;top:760px;width:34px;height:37px;background:#d6d4c8"></div>
<svg class="a" style="left:222px;top:764px" width="36" height="36"><defs><linearGradient id="cyl" x1="0" x2="1"><stop offset="0" stop-color="#f4f4f4"/><stop offset=".5" stop-color="#b8b8b8"/><stop offset="1" stop-color="#6a6a6a"/></linearGradient></defs><path d="M23.3 13.5 L22.7 14.9 L19.4 15.1 L18.4 15.9 L18.9 18.3 L17.1 19.0 L14.6 17.4 L13.2 17.5 L11.2 19.4 L9.2 19.0 L9.1 16.5 L7.9 15.9 L4.6 16.2 L3.7 14.9 L5.9 13.0 L5.8 12.0 L3.1 10.5 L3.7 9.1 L7.0 8.9 L8.0 8.1 L7.5 5.7 L9.3 5.0 L11.8 6.6 L13.2 6.5 L15.2 4.6 L17.2 5.0 L17.3 7.5 L18.5 8.1 L21.8 7.8 L22.7 9.1 L20.5 11.0 L20.6 12.0 Z" fill="#dcdcd8" stroke="#111" stroke-width="1.6"/><circle cx="13.2" cy="12" r="3" fill="#fff" stroke="#111" stroke-width="1"/><path d="M33.4 23.9 L32.8 25.3 L29.2 25.5 L28.3 26.3 L28.8 28.9 L26.9 29.6 L24.3 27.9 L22.8 28.0 L20.7 30.0 L18.6 29.6 L18.5 27.0 L17.3 26.3 L13.8 26.7 L12.8 25.3 L15.2 23.4 L15.0 22.3 L12.2 20.7 L12.8 19.3 L16.4 19.1 L17.3 18.3 L16.8 15.7 L18.7 15.0 L21.3 16.7 L22.8 16.6 L24.9 14.6 L27.0 15.0 L27.1 17.6 L28.3 18.3 L31.8 17.9 L32.8 19.3 L30.4 21.2 L30.6 22.3 Z" fill="#ecf0a0" stroke="#111" stroke-width="1.6"/><rect x="10.8" y="4" width="5.4" height="9.5" fill="url(#cyl)" stroke="#222" stroke-width=".9"/><ellipse cx="13.5" cy="4" rx="2.7" ry="1.2" fill="#fff" stroke="#222" stroke-width=".8"/><rect x="19.6" y="14.6" width="5.4" height="8.5" fill="url(#cyl)" stroke="#222" stroke-width=".9"/><ellipse cx="22.3" cy="14.6" rx="2.7" ry="1.2" fill="#fff" stroke="#222" stroke-width=".8"/></svg>
<svg class="a" style="left:563px;top:766px" width="32" height="28"><rect x="0.5" y="0.5" width="31" height="27" fill="#fff" stroke="#111" stroke-width="1.5"/><rect x="1.5" y="1.5" width="29" height="5" fill="#183a7a"/><rect x="22" y="2.5" width="2" height="2" fill="#fff"/><rect x="25" y="2.5" width="2" height="2" fill="#fff"/><rect x="28" y="2.5" width="2" height="2" fill="#fff"/><rect x="2" y="7" width="10" height="4" fill="#c8ccd8"/><rect x="14" y="7" width="15" height="4" fill="#fff" stroke="#333" stroke-width=".8"/><g fill="#6a4a3a"><rect x="4" y="13" width="3" height="3"/><rect x="9" y="13" width="3" height="3"/><rect x="14" y="13" width="3" height="3" fill="#c87a30"/><rect x="19" y="13" width="3" height="3" fill="#e0c060"/><rect x="24" y="13" width="3" height="3" fill="#a06030"/><rect x="4" y="18" width="3" height="3"/><rect x="9" y="18" width="3" height="3" fill="#8a6a5a"/><rect x="14" y="18" width="3" height="3" fill="#8a7a5a"/><rect x="19" y="18" width="3" height="3" fill="#333"/></g></svg>
<svg class="a" style="left:900px;top:760px" width="34" height="37"><path d="M4.2 2.5 Q10 0.5 16.6 1.2 L20.2 12.5 L7.1 15.2 Q6 8 4.2 2.5 Z" fill="#b4d4f4" stroke="#5a6a80" stroke-width="1"/><path d="M2.5 23 Q2 18 8 16.5 L19 14 Q27 14 29 19 L29.5 27 L15 32.5 L3 28.5 Z" fill="#d8d8d8" stroke="#333" stroke-width="1.1"/><path d="M3 22.5 L17 18 L28.5 21 L15 26 Z" fill="#f2f2f2"/><path d="M15 26 L28.5 21 L29 27 L15 32 Z" fill="#a8a8a8"/><path d="M17 28.5 L26 25.5" stroke="#444" stroke-width="1.5"/></svg>
<div class="a" style="left:261px;top:780px;font-size:16.5px;line-height:20px;color:#000;letter-spacing:.3px">Control</div>
<div class="a" style="left:600px;top:778px;font-size:16.5px;line-height:20px;color:#000;letter-spacing:.4px">Settings</div>
<div class="a" style="left:937px;top:778px;font-size:16.5px;line-height:20px;color:#000;letter-spacing:.3px">Reports</div>
<div class="a" style="left:345.5px;top:414.3px;font:bold 38.3px 'Liberation Sans',sans-serif;line-height:46px;color:rgba(255,255,255,.8);white-space:nowrap;transform:scaleY(1.06);transform-origin:0 35.7px">applicationsystem.trustpass.alibaba.com</div>
<div class="a" style="left:0;top:870px;width:1440px;height:30px;background:linear-gradient(#3d6fe0 0,#2a5bd8 2px,#2457d4 4px,#2454d2 60%,#1e4ac0 100%);border-top:1px solid #5a8aee"></div>
<div class="a" style="left:0;top:870px;width:96px;height:30px;border-radius:0 12px 12px 0;background:linear-gradient(#4ca84a,#3a963a 40%,#2e8a30 80%,#2a7a2a);box-shadow:inset -2px 0 3px #1e5a1e"></div>
<svg class="a" style="left:10px;top:876px" width="20" height="18"><g transform="skewY(-6)"><rect x="1" y="3" width="8" height="7" fill="#f05a28"/><rect x="10" y="3" width="8" height="7" fill="#7cbb00"/><rect x="1" y="11" width="8" height="7" fill="#1a9fe8"/><rect x="10" y="11" width="8" height="7" fill="#ffc000"/></g></svg>
<div class="a" style="left:34px;top:874px;color:#fff;font:italic bold 18px 'Liberation Sans',sans-serif;line-height:22px;text-shadow:1px 1px 1px #1a4a1a">start</div>
<div class="tb" style="left:106px;width:159px;background:#1e48b4;box-shadow:inset 1px 1px 2px #102a80"></div>
<div class="a" style="left:116px;top:877px;width:17px;height:15px;background:#e01010;color:#ffd8c0;font-size:11px;line-height:15px;text-align:center;letter-spacing:-.5px">MT</div>
<div class="a" style="left:136px;top:879px;color:#fff;font-size:11px;line-height:12px">JIMT</div>
<div class="tb" style="left:266px;width:158px;background:#3c81f3;box-shadow:inset -1px -1px 0 #2a5ad0,inset 1px 1px 0 #6aa0f8"></div>
<svg class="a" style="left:275px;top:878px" width="16" height="13"><path d="M1 3h5l1 1h8v8H1z" fill="#f0d070" stroke="#a08030" stroke-width="1"/></svg>
<div class="a" style="left:295px;top:879px;color:#fff;font-size:11px;line-height:12px">Jain irrigation System...</div>
<div class="tb" style="left:426px;width:159px;background:#3c81f3;box-shadow:inset -1px -1px 0 #2a5ad0,inset 1px 1px 0 #6aa0f8"></div>
<svg class="a" style="left:437px;top:876px" width="12" height="17"><path d="M2 4l2 -3 2 3 2 -3 2 3v8l-4 4-4-4z" fill="#e8c040" stroke="#806020" stroke-width=".8"/><rect x="4" y="6" width="4" height="6" fill="#3060c0"/></svg>
<div class="a" style="left:455px;top:879px;color:#fff;font-size:11px;line-height:12px">untitled - Paint</div>
<div class="a" style="left:1311px;top:871px;width:129px;height:29px;background:linear-gradient(#12a0f0,#0f94e8 50%,#0e88dc);border-left:1px solid #1050b0"></div>
<svg class="a" style="left:1260px;top:876px" width="120" height="20"><path d="M2.5 2.5 H13.5 V14.5 H8 L5.5 17 V14.5 H2.5 Z" fill="#fffbd8" stroke="#000" stroke-width="1.2"/><text x="8" y="12.5" font-family="Liberation Sans" font-weight="bold" font-size="10.5" text-anchor="middle" fill="#000">?</text><rect x="28" y="1" width="6" height="4" fill="none" stroke="#fff" stroke-width="1.2"/><rect x="26" y="3.5" width="6" height="4" fill="#2a5ad8" stroke="#fff" stroke-width="1.2"/><path d="M27 12.5 H32.5 L29.75 16 Z" fill="#fff"/><circle cx="51.7" cy="9.5" r="8.6" fill="#3a8ef0" stroke="#cfe6ff" stroke-width="1.2"/><circle cx="50" cy="7" r="5" fill="#7cc0ff" opacity=".55"/><path d="M54 5 L49.5 9.5 L54 14" fill="none" stroke="#fff" stroke-width="2.4"/><path d="M63 8 L72 5 L76 12 L67 15 Z" fill="#9aa8a0" stroke="#234" stroke-width="1"/><path d="M64 4 Q68 0 72 3 L68 7 Z" fill="#3cb83c"/><rect x="80" y="3" width="7" height="8" fill="#5a5aa8" stroke="#223" stroke-width=".8"/><rect x="85" y="0.5" width="7" height="8" fill="#6a6ab8" stroke="#223" stroke-width=".8"/><path d="M88 10 L95 17 M95 10 L88 17" stroke="#e02020" stroke-width="2"/><rect x="99" y="1.5" width="15" height="11" fill="#0a1020" stroke="#000" stroke-width="1"/><rect x="104" y="12.5" width="5" height="2" fill="#222"/><path d="M102 10 L105 4 L108 8 L111 3" stroke="#dde" stroke-width="1.3" fill="none"/></svg>
<div class="a" style="left:1384px;top:879px;color:#fff;font-size:11px;line-height:12px;letter-spacing:-.1px">2:46 PM</div>
<div class="a" style="left:430.6px;top:197px;font-weight:bold;font-size:23px;line-height:24px;color:#fff;white-space:nowrap;transform:scaleX(0.8);transform-origin:0 0">V</div>
<div class="a" style="left:658.1px;top:197.5px;font-family:'Liberation Serif',serif;font-weight:bold;font-size:24px;line-height:24px;color:#fff;white-space:nowrap;transform:scaleX(1.0);transform-origin:0 0">I</div>
<div class="a" style="left:887.9px;top:197.5px;font-weight:bold;font-size:23px;line-height:24px;color:#fff;white-space:nowrap;transform:scaleX(0.76);transform-origin:0 0">N</div>
<div class="a" style="left:419.2px;top:391.5px;font-size:22.5px;line-height:24px;color:#fff;white-space:nowrap;transform:scaleX(0.9);transform-origin:0 0">Pi</div>
<div class="a" style="left:647.4px;top:391.5px;font-size:23px;line-height:24px;color:#fff;white-space:nowrap;transform:scaleX(0.85);transform-origin:0 0">Po</div>
<div class="a" style="left:886.5px;top:391.5px;font-size:23px;line-height:24px;color:#fff;white-space:nowrap;transform:scaleX(0.95);transform-origin:0 0">T</div>
<div class="a" style="left:875.3px;top:487.5px;font-size:22px;line-height:24px;color:#fff;white-space:nowrap;transform:scaleX(0.98);transform-origin:0 0">Eff</div>
</body></html>
